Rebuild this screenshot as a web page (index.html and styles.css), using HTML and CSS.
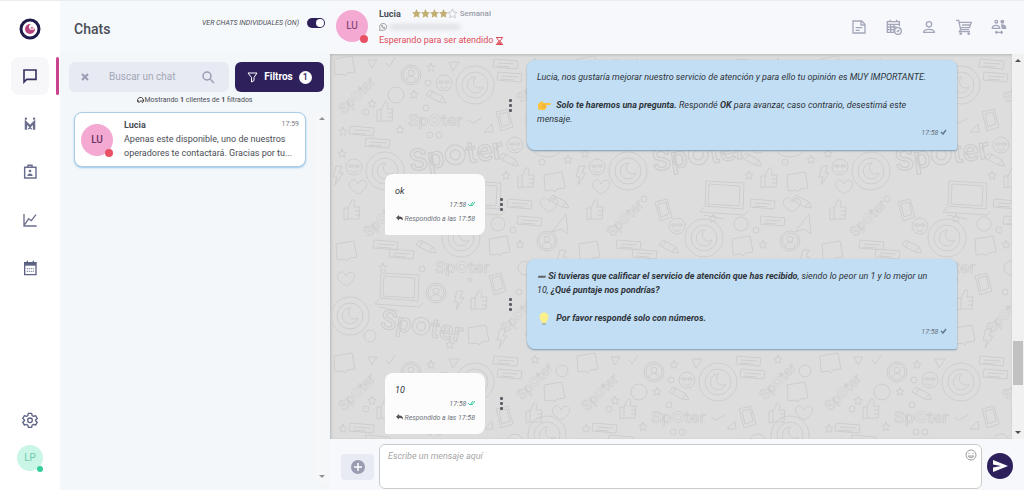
FILE: index.html
```html
<!DOCTYPE html>
<html lang="es">
<head>
    <meta charset="UTF-8">
    <meta name="viewport" content="width=device-width, initial-scale=1.0">
    <title>Chats</title>
    <link rel="stylesheet" href="styles.css">
</head>
<body>
    <div class="app">
        <!-- Sidebar -->
        <nav class="sidebar">
            <a href="#" class="logo" aria-label="Inicio">
                <svg width="22" height="22" viewBox="0 0 22 22">
                    <circle cx="11" cy="11" r="9" fill="#fff" stroke="#1f1c4b" stroke-width="3"/>
                    <circle cx="11" cy="11" r="5" fill="#b8447f"/>
                    <circle cx="13" cy="9" r="3" fill="#fff"/>
                    <circle cx="13" cy="10" r="1.500" fill="#d58fb2"/>
                </svg>
            </a>
            <a href="#" class="nav-item active" aria-label="Chats">
                <svg width="16" height="16" viewBox="0 0 24 24" fill="none" stroke="#38305f" stroke-width="2.4"><path d="M3 3h18v14H7l-4 4z"/></svg>
            </a>
            <a href="#" class="nav-item" aria-label="Contactos">
                <svg width="14" height="14" viewBox="0 0 24 24" fill="none" stroke="#6b6f8e" stroke-width="4"><path d="M5 22V9l7 7 7-7v13"/><path d="M9 21l3-3 3 3" stroke-width="2"/><circle cx="5" cy="3" r="1" stroke-width="2"/><circle cx="19" cy="3" r="1" stroke-width="2"/></svg>
            </a>
            <a href="#" class="nav-item" aria-label="Operadores">
                <svg width="16" height="16" viewBox="0 0 24 24" fill="none" stroke="#6b6f8e" stroke-width="2.2"><path d="M4 5h17v16H4zM9 5V2h6v3"/><circle cx="12" cy="10.500" r="2" fill="#6b6f8e" stroke="none"/><path d="M8 18c0-5 8-5 8 0z" fill="#6b6f8e" stroke="none"/></svg>
            </a>
            <a href="#" class="nav-item" aria-label="Estadísticas">
                <svg width="16" height="16" viewBox="0 0 24 24" fill="none" stroke="#6b6f8e" stroke-width="2"><path d="M3 3v18h19M4 19l6-9 4 3 7-9"/></svg>
            </a>
            <a href="#" class="nav-item" aria-label="Calendario">
                <svg width="16" height="16" viewBox="0 0 24 24" fill="none" stroke="#5e6284" stroke-width="2"><path d="M4 4h17v18H4z"/><path d="M4 6h17" stroke-width="5"/><path d="M8 1v4M17 1v4"/><path d="M7 13h11M7 17h11" stroke-dasharray="2 1" stroke="#9598ae"/></svg>
            </a>
            <div class="nav-bottom">
                <a href="#" aria-label="Configuración">
                    <svg width="16" height="16" viewBox="0 0 24 24" fill="none" stroke="#5e6284" stroke-width="2" stroke-linejoin="round"><path d="M9.500 2h5l.6 3.200 2.200 1.300 3.100-1.100 2.500 4.300-2.500 2.100v1.400l2.500 2.100-2.500 4.300-3.100-1.100-2.200 1.300-.6 3.200h-5l-.6-3.200-2.200-1.300-3.100 1.100-2.500-4.300 2.500-2.100v-1.400l-2.500-2.100 2.500-4.300 3.100 1.100 2.200-1.300z"/><circle cx="12" cy="12.500" r="3.500"/></svg>
                </a>
                <div class="avatar avatar-user">LP<span class="status"></span></div>
            </div>
        </nav>

        <!-- Chat list -->
        <aside class="chats">
            <header class="chats-header">
                <h1>Chats</h1>
                <label class="toggle">VER CHATS INDIVIDUALES (ON)
                    <input type="checkbox" checked>
                </label>
            </header>
            <div class="search-row">
                <div class="search">
                    <button aria-label="Limpiar"><svg width="8" height="8" viewBox="0 0 8 8" stroke="#9a9db3" stroke-width="2"><path d="M1 1l6 6M7 1L1 7"/></svg></button>
                    <input type="text" placeholder="Buscar un chat" aria-label="Buscar un chat">
                    <button aria-label="Buscar"><svg width="13" height="13" viewBox="0 0 13 13" fill="none" stroke="#9a9db3" stroke-width="1.500"><circle cx="5" cy="5" r="4"/><path d="M8 8l4 4"/></svg></button>
                </div>
                <button class="filters">
                    <svg width="11" height="11" viewBox="0 0 11 11" fill="none" stroke="#fff"><path d="M1 1h9L7 5.500v3L4.500 10V5.500z"/></svg>
                    Filtros <span class="count">1</span>
                </button>
            </div>
            <p class="results">
                <svg width="7" height="7" viewBox="0 0 7 7" fill="none" stroke="#444"><path d="M1 5a3 3 0 1 1 4 1M1 3v2h2M3 4h3"/></svg>Mostrando <b>1</b> clientes de <b>1</b> filtrados
            </p>
            <div class="list-wrap">
                <div class="list">
                    <a href="#" class="chat-card">
                        <div class="avatar">LU<span class="status"></span></div>
                        <div class="chat-info">
                            <div class="chat-top"><b>Lucia</b><time>17:59</time></div>
                            <p>Apenas este disponible, uno de nuestros operadores te contactará. Gracias por tu...</p>
                        </div>
                    </a>
                </div>
                <div class="scrollbar light"><i class="up"></i><i class="down"></i></div>
            </div>
        </aside>

        <!-- Conversation -->
        <main class="conversation">
            <header class="conv-header">
                <div class="avatar">LU<span class="status"></span></div>
                <div class="contact">
                    <div class="contact-name">
                        <b>Lucia</b>
                        <svg class="stars" width="46" height="10" viewBox="0 0 46 10">
                            <defs><path id="star" d="M4.500 0l1.400 3 3.100.4-2.300 2.200.6 3.200-2.800-1.500-2.800 1.500.6-3.200L0 3.400 3.100 3z"/></defs>
                            <g fill="#c1ae72"><use href="#star"/><use href="#star" x="9"/><use href="#star" x="18"/><use href="#star" x="27"/></g>
                            <use href="#star" x="36" fill="none" stroke="#b9b9b9" stroke-width=".7"/>
                        </svg>
                        <span class="tag">Semanal</span>
                    </div>
                    <div class="phone">
                        <svg width="8" height="8" viewBox="0 0 16 16" fill="none" stroke="#888" stroke-width="1.500"><path d="M1 15l1-4a7 7 0 1 1 3 3zM5 5c0 3 3 6 6 6l1-2-2-1-1 1-2-2 1-1-1-2z"/></svg>
                        <span class="phone-hidden"></span>
                    </div>
                    <div class="waiting">Esperando para ser atendido
                        <svg width="7" height="8" viewBox="0 0 7 8" fill="none" stroke="#e04c58"><path d="M0 .5h7M0 7.500h7M1 1c0 3 5 3 5 6M6 1c0 3-5 3-5 6"/><path d="M2 7l1.500-2L5 7z" fill="#e04c58"/></svg>
                    </div>
                </div>
                <div class="actions">
                    <button aria-label="Notas"><svg width="16" height="16" viewBox="0 0 24 24"><path d="M3 3h13l5 5v13H3zM15 3v6h6M7 13h10M7 17h6"/></svg></button>
                    <button aria-label="Agenda"><svg width="16" height="16" viewBox="0 0 24 24"><path d="M12 20H2V4h18v7M2 8h18M6 1v4M16 1v4M7 8v12M12 8v12M2 12h14M2 16h10"/><circle cx="18" cy="18" r="5"/><path d="M16 18l2 1 2-3"/></svg></button>
                    <button aria-label="Perfil"><svg width="16" height="16" viewBox="0 0 24 24"><circle cx="12" cy="8" r="4"/><path d="M4 20c0-6 16-6 16 0z"/></svg></button>
                    <button aria-label="Carrito"><svg width="16" height="16" viewBox="0 0 24 24"><path d="M0 2h4l3 14h13M5 5h18l-3 8H7M7 16l-2 3h16M9 9h12"/><circle cx="7" cy="22" r="1"/><circle cx="19" cy="22" r="1"/></svg></button>
                    <button aria-label="Transferir"><svg width="16" height="16" viewBox="0 0 24 24"><circle cx="8" cy="4" r="2"/><path d="M2 14c0-6 11-6 11 0z"/><circle cx="17" cy="4" r="2" fill="#a3a6b9"/><path d="M16 9c5 0 6 2 6 5h-5z" fill="#a3a6b9"/><path d="M7 20h10M9 18l-2 2 2 2M15 18l2 2-2 2"/></svg></button>
                </div>
            </header>

            <div class="messages-wrap">
                <div class="messages">
                    <svg class="wallpaper" aria-hidden="true">
                        <defs>
                            <g id="moon"><circle r="19"/><circle r="13"/><path d="M1-8a8 8 0 1 0 7 10a6 6 0 0 1-7-10z"/></g>
                            <g id="word"><text class="doodle-text" x="-36" y="8">Sp</text><circle cx="1" r="8"/><circle cx="1" r="4"/><text class="doodle-text" x="10" y="8">ter</text></g>
                            <g id="note"><path d="M-10-7l18-3 3 16-8 1-2 3-2-2-8 1z"/></g>
                            <g id="label"><path d="M-12-5l24 2-1 8-24-2zM-8-1l16 1M-9 2l13 1"/></g>
                            <g id="pencil"><path d="M-9-7l13 7 3 6-7-1-13-7zM4 0l-4 5M-6-6l-3 5"/></g>
                            <g id="thumb"><path d="M-8-2h4l4-8c4-1 3 3 2 7h6l-1 12H-4l-4 1zM-4-2v11M3 1h5M3 5h5"/></g>
                            <g id="person"><circle r="10"/><circle r="8"/><circle cy="-2" r="3"/><path d="M-5 6c0-6 10-6 10 0"/></g>
                            <g id="smile"><circle r="8"/><path d="M-5-2h4v2h-4zM1-2h4v2H1zM-4 3c2 3 6 3 8 0"/></g>
                            <g id="tablet"><path d="M-8-8l12-3 5 18-12 4zM-5-6l8-2 3 12-8 3z"/></g>
                            <g id="laptop"><path d="M-18-14l38 2-1 26-38-3zM-15-11l31 2-1 20-31-2zM-20 12l-4 5 44 3 4-4M-20 20l20 4"/></g>
                            <g id="heart"><path d="M0 7c-8-5-11-9-7-13 3-3 6 0 7 3 2-4 6-5 8-2 2 4-2 9-8 12z"/></g>
                            <g id="bolt"><path d="M-2-9h6L1-2h4l-8 12 2-8h-4z"/></g>
                            <g id="mini"><path d="M0-4l1 3 3 .4-2 2 .4 3-2.400-1.500L-2.400 4.400l.4-3-2-2 3-.4z"/></g>
                            <pattern id="doodles" width="243" height="297" patternUnits="userSpaceOnUse">
                                <g class="doodle">
                                    <use href="#moon" x="145" y="31"/><use href="#moon" x="55" y="117"/><use href="#moon" x="131" y="184"/><use href="#moon" x="217" y="84"/><use href="#moon" x="20" y="262"/>
                                    <use href="#word" transform="translate(26 42) rotate(-45) scale(.6)"/>
                                    <use href="#word" transform="translate(104 66) scale(.72)"/>
                                    <use href="#word" transform="translate(124 101) rotate(-8) scale(1.250)"/>
                                    <use href="#word" transform="translate(51 165) rotate(-45) scale(.6)"/>
                                    <use href="#word" transform="translate(131 213) scale(.72)"/>
                                    <use href="#word" transform="translate(90 272) rotate(10) scale(1.100)"/>
                                    <use href="#word" transform="translate(204 31) rotate(-45) scale(.6)"/>
                                    <use href="#word" transform="translate(188 261) rotate(-45) scale(.6)"/>
                                    <use href="#note" x="14" y="12"/><use href="#note" x="224" y="41"/><use href="#note" x="224" y="128"/><use href="#note" x="169" y="192"/><use href="#note" x="16" y="197"/><use href="#note" x="148" y="281"/>
                                    <use href="#label" x="176" y="10"/><use href="#label" x="180" y="23"/><use href="#label" x="32" y="77"/><use href="#label" x="48" y="89"/><use href="#label" x="190" y="150"/><use href="#label" x="200" y="167"/><use href="#label" x="56" y="191"/><use href="#label" x="72" y="200"/><use href="#label" x="221" y="232"/>
                                    <use href="#pencil" x="109" y="43"/><use href="#pencil" x="182" y="106"/><use href="#pencil" x="232" y="148"/><use href="#pencil" x="99" y="193"/><use href="#pencil" x="208" y="282"/>
                                    <use href="#thumb" x="55" y="58"/><use href="#thumb" x="204" y="62"/><use href="#thumb" x="196" y="124"/><use href="#thumb" x="22" y="156"/><use href="#thumb" x="149" y="246"/>
                                    <use href="#person" x="81" y="21"/><use href="#person" x="217" y="187"/><use href="#person" x="106" y="239"/>
                                    <use href="#smile" x="114" y="29"/><use href="#smile" x="24" y="113"/><use href="#smile" x="185" y="91"/><use href="#smile" x="221" y="256"/><use href="#smile" x="104" y="172"/>
                                    <use href="#tablet" x="174" y="66"/><use href="#tablet" x="90" y="156"/><use href="#tablet" x="167" y="230"/>
                                    <use href="#laptop" x="151" y="141"/><use href="#laptop" x="69" y="233"/>
                                    <use href="#heart" x="28" y="133"/><use href="#heart" x="219" y="151"/><use href="#heart" x="231" y="62"/><use href="#heart" x="16" y="225"/>
                                    <use href="#bolt" x="8" y="121"/><use href="#bolt" x="129" y="246"/><use href="#bolt" x="172" y="284"/><use href="#bolt" x="232" y="205"/>
                                    <circle cx="66" cy="41" r="8"/><circle cx="168" cy="170" r="7"/><circle cx="232" cy="20" r="6"/><circle cx="195" cy="214" r="7"/><circle cx="40" cy="282" r="6"/>
                                    <path d="M38 6h9l-5 8zM119 8h10l-6 9zM154 78h9l-1-8zM222 178l14-18 2 20-7-5zM56 9l3 4 6-9M138 66l5 3 9-5"/>
                                    <use href="#mini" x="42" y="49"/><use href="#mini" x="84" y="40"/><use href="#mini" x="13" y="77"/><use href="#mini" x="70" y="75"/><use href="#mini" x="12" y="99"/><use href="#mini" x="101" y="13"/><use href="#mini" x="205" y="8"/><use href="#mini" x="176" y="121"/><use href="#mini" x="140" y="164"/><use href="#mini" x="53" y="213"/><use href="#mini" x="190" y="190"/><use href="#mini" x="238" y="105"/><use href="#mini" x="207" y="219"/><use href="#mini" x="120" y="290"/>
                                    <circle cx="98" cy="29" r="3"/><circle cx="96" cy="54" r="3"/><circle cx="36" cy="58" r="3"/><circle cx="100" cy="81" r="3"/><circle cx="109" cy="81" r="3"/><circle cx="212" cy="108" r="3"/><circle cx="71" cy="145" r="3"/><circle cx="183" cy="176" r="3"/><circle cx="92" cy="215" r="3"/><circle cx="140" cy="226" r="2"/><circle cx="189" cy="238" r="3"/>
                                </g>
                            </pattern>
                        </defs>
                        <rect width="100%" height="100%" fill="url(#doodles)"/>
                    </svg>

                    <div class="row sent">
                        <button class="dots" aria-label="Opciones"><i></i><i></i><i></i></button>
                        <div class="bubble">
                            <p>Lucia, nos gustaría mejorar nuestro servicio de atención y para ello tu opinión es MUY IMPORTANTE.</p>
                            <p class="spaced"><svg class="emoji" width="14" height="11" viewBox="0 0 14 11"><path d="M1 4l4-3 2 2h6c1 0 1 2 0 2H9c1 1 1 2 0 3 0 1-1 2-2 2H3L1 9z" fill="#fcc43e"/><path d="M5 5h4M5 7h4" stroke="#e2992f" stroke-width=".6"/></svg> <b>Solo te haremos una pregunta.</b> Respondé <b>OK</b> para avanzar, caso contrario, desestimá este mensaje.</p>
                            <div class="meta">17:58 <svg width="7" height="6" viewBox="0 0 7 6" fill="none" stroke="#667b8c" stroke-width="1.500"><path d="M1 3l2 2 3-4"/></svg></div>
                        </div>
                    </div>

                    <div class="row received">
                        <div class="bubble">
                            <p>ok</p>
                            <div class="meta">17:58 <svg width="7" height="7" viewBox="0 0 7 7" fill="none" stroke="#35c99a"><path d="M0 4l2 2 3-4M3 5l1 1 3-4"/></svg></div>
                            <div class="replied"><svg width="7" height="6" viewBox="0 0 7 6"><path d="M3 0v1.500c3 0 4 1 4 4C6 4 5 4 3 4v1.500L0 2.700z" fill="#555"/></svg> Respondido a las 17:58</div>
                        </div>
                        <button class="dots" aria-label="Opciones"><i></i><i></i><i></i></button>
                    </div>

                    <div class="row sent">
                        <button class="dots" aria-label="Opciones"><i></i><i></i><i></i></button>
                        <div class="bubble">
                            <p><b><span class="dash">➖</span> Si tuvieras que calificar el servicio de atención que has recibido</b>, siendo lo peor un 1 y lo mejor un 10, <b>¿Qué puntaje nos pondrías?</b></p>
                            <p class="spaced"><svg class="emoji" width="14" height="13" viewBox="0 0 14 13"><circle cx="7" cy="5" r="4.500" fill="#fbf08a"/><path d="M4 8h6l-1 3H5z" fill="#fbf08a"/><path d="M5 11h4v1l-1 1H6l-1-1z" fill="#a9b2b6"/></svg> <b>Por favor respondé solo con números.</b></p>
                            <div class="meta">17:58 <svg width="7" height="6" viewBox="0 0 7 6" fill="none" stroke="#667b8c" stroke-width="1.500"><path d="M1 3l2 2 3-4"/></svg></div>
                        </div>
                    </div>

                    <div class="row received">
                        <div class="bubble">
                            <p>10</p>
                            <div class="meta">17:58 <svg width="7" height="7" viewBox="0 0 7 7" fill="none" stroke="#35c99a"><path d="M0 4l2 2 3-4M3 5l1 1 3-4"/></svg></div>
                            <div class="replied"><svg width="7" height="6" viewBox="0 0 7 6"><path d="M3 0v1.500c3 0 4 1 4 4C6 4 5 4 3 4v1.500L0 2.700z" fill="#555"/></svg> Respondido a las 17:58</div>
                        </div>
                        <button class="dots" aria-label="Opciones"><i></i><i></i><i></i></button>
                    </div>
                </div>
                <div class="scrollbar"><i class="up"></i><span class="thumb"></span><i class="down"></i></div>
            </div>

            <footer class="composer">
                <button class="attach" aria-label="Adjuntar">
                    <svg width="14" height="14" viewBox="0 0 14 14"><circle cx="7" cy="7" r="7" fill="#9a9cb2"/><path d="M7 3v8M3 7h8" stroke="#fff" stroke-width="1.500"/></svg>
                </button>
                <div class="message-box">
                    <textarea placeholder="Escribe un mensaje aquí" aria-label="Mensaje"></textarea>
                    <button class="smiley" aria-label="Emojis">
                        <svg width="12" height="12" viewBox="0 0 12 12" fill="none" stroke="#9c9c9c"><circle cx="6" cy="6" r="5"/><path d="M4 4v1M8 4v1M3 7c1 2 5 2 6 0z"/></svg>
                    </button>
                </div>
                <button class="send" aria-label="Enviar">
                    <svg width="16" height="14" viewBox="0 0 16 14"><path d="M1 1l15 6-15 6V8.500L9 7 1 5.500z" fill="#fff"/></svg>
                </button>
            </footer>
        </main>
    </div>
</body>
</html>
```
FILE: styles.css
```css
* {
    margin: 0;
    padding: 0;
    box-sizing: border-box;
}

body {
    font-family: Roboto, "Liberation Sans", sans-serif;
    font-size: 9px;
    line-height: 14px;
    color: #4a4d55;
    background-color: #fff;
}

button, input, textarea {
    font: inherit;
    color: inherit;
    border: none;
    background: none;
    outline: none;
}

button {
    cursor: pointer;
}

a {
    color: inherit;
    text-decoration: none;
}

svg {
    flex: none;
}

.app {
    display: grid;
    grid-template-columns: 60px 270px 1fr;
    height: 100vh;
    border-top: 1px solid #e9edf2;
}

/* Sidebar */
.sidebar {
    display: flex;
    flex-direction: column;
    align-items: center;
    gap: 10px;
    padding: 17px 0 19px;
}

.logo {
    height: 22px;
    margin-bottom: 7px;
}

.nav-item {
    display: flex;
    align-items: center;
    justify-content: center;
    width: 38px;
    height: 38px;
    border-radius: 8px;
}

.nav-item.active {
    position: relative;
    background-color: #f7f7f9;
}

.nav-item.active::after {
    content: "";
    position: absolute;
    right: -10px;
    width: 3px;
    height: 38px;
    border-radius: 2px;
    background-color: #c9438f;
}

.nav-bottom {
    display: flex;
    flex-direction: column;
    align-items: center;
    gap: 17px;
    margin-top: auto;
}

.nav-bottom a {
    height: 16px;
}

.avatar {
    position: relative;
    display: flex;
    flex: none;
    align-items: center;
    justify-content: center;
    width: 32px;
    height: 32px;
    border-radius: 50%;
    background-color: #f4a9d3;
    color: #6d3563;
    font-size: 10px;
    font-weight: 500;
}

.status {
    position: absolute;
    right: 0;
    bottom: -1px;
    width: 8px;
    height: 8px;
    border-radius: 50%;
    background-color: #ea5064;
}

.avatar-user {
    width: 26px;
    height: 26px;
    background-color: #c9f6e6;
    color: #71cbae;
    font-weight: 400;
}

.avatar-user .status {
    width: 6px;
    height: 6px;
    background-color: #32cf9c;
}

/* Chat list */
.chats {
    display: flex;
    flex-direction: column;
    background-color: #f3f7fa;
}

.chats-header {
    display: flex;
    justify-content: space-between;
    height: 51px;
    padding: 15px 5px 0 14px;
    background-color: #f6f9fc;
}

.chats-header h1 {
    font-size: 14px;
    font-weight: 500;
    line-height: 26px;
}

.toggle {
    display: flex;
    align-items: center;
    gap: 8px;
    height: 14px;
    font-size: 7px;
    font-style: italic;
}

.toggle input {
    display: flex;
    align-items: center;
    justify-content: flex-end;
    appearance: none;
    width: 18px;
    height: 10px;
    padding: 1px;
    border-radius: 5px;
    background-color: #2e205b;
}

.toggle input::before {
    content: "";
    width: 8px;
    height: 8px;
    border-radius: 50%;
    background-color: #fff;
}

.search-row {
    display: flex;
    gap: 6px;
    padding: 10px 6px 0 9px;
}

.search {
    display: flex;
    flex: 1;
    align-items: center;
    gap: 16px;
    height: 30px;
    padding: 0 14px 0 12px;
    border-radius: 6px;
    background-color: #e7eaf3;
}

.search button {
    display: flex;
}

.search input {
    flex: 1;
    width: 0;
    padding-left: 4px;
    font-size: 9px;
}

.search input::placeholder {
    color: #a4a7b7;
}

.filters {
    display: flex;
    align-items: center;
    justify-content: center;
    gap: 6px;
    width: 89px;
    border-radius: 6px;
    background-color: #2e205b;
    color: #fff;
    font-size: 9px;
    font-weight: 700;
}

.search input, .filters {
    font-size: 10px;
}

.count {
    width: 13px;
    height: 13px;
    border-radius: 50%;
    background-color: #fff;
    color: #2e205b;
    font-size: 9px;
    font-weight: 500;
    line-height: 13px;
}

.results {
    padding: 1px 0 5px;
    font-size: 7px;
    text-align: center;
}

.results svg {
    vertical-align: middle;
}

.list-wrap {
    display: flex;
    flex: 1;
    padding-bottom: 7px;
}

.list {
    flex: 1;
    padding: 0 10px 0 14px;
}

.chat-card {
    display: flex;
    gap: 11px;
    height: 55px;
    padding: 5px 6px;
    border: 1px solid #a9cde8;
    border-radius: 8px;
    background-color: #fff;
    box-shadow: 0 1px 2px #9cc6e6;
}

.chat-card .avatar {
    margin-top: 6px;
}

.chat-info {
    flex: 1;
    min-width: 0;
}

.chat-top {
    display: flex;
    justify-content: space-between;
}

.chat-top time {
    color: #777a82;
    font-size: 7px;
    line-height: 12px;
}

/* Scrollbars */
.scrollbar {
    display: flex;
    flex-direction: column;
    align-items: center;
    width: 12px;
    padding: 5px 0;
    background-color: #f1f1f1;
}

.scrollbar .up, .scrollbar .down {
    border: 3px solid transparent;
    border-top-width: 0;
    border-bottom: 3px solid #505050;
}

.scrollbar .down {
    border-top: 3px solid #505050;
    border-bottom-width: 0;
    margin-top: auto;
}

.scrollbar .thumb {
    width: 10px;
    height: 44px;
    margin-top: auto;
    background-color: #c1c1c1;
}

.scrollbar .thumb + .down {
    margin-top: 46px;
}

.scrollbar.light {
    margin-right: 2px;
    background-color: #f5f7f9;
}

.scrollbar.light i {
    opacity: .6;
}

/* Conversation */
.conversation {
    display: flex;
    flex-direction: column;
    min-width: 0;
    height: calc(100vh - 1px);
    background-color: #f6f8fc;
}

.conv-header {
    display: flex;
    flex: none;
    gap: 11px;
    height: 53px;
    padding: 6px 16px 0 6px;
}

.conv-header .avatar {
    margin-top: 3px;
    font-weight: 400;
}

.contact-name {
    display: flex;
    align-items: center;
}

.contact-name .stars {
    margin: 0 2px 0 11px;
}

.tag {
    color: #999ca6;
    font-size: 8px;
    font-weight: 500;
}

.phone {
    display: flex;
    align-items: center;
    height: 12px;
}

.phone-hidden {
    width: 70px;
    height: 6px;
    margin-left: 3px;
    background-color: #dfe1e5;
    filter: blur(2px);
}

.waiting {
    color: #e04c58;
}

.waiting svg {
    vertical-align: middle;
}

.actions {
    display: flex;
    gap: 19px;
    height: 16px;
    margin: 12px 1px 0 auto;
}

.actions svg {
    display: block;
    fill: none;
    stroke: #a3a6b9;
    stroke-width: 2;
}

.messages-wrap {
    display: flex;
    flex: 1;
    min-height: 0;
}

.messages {
    position: relative;
    display: flex;
    flex: 1;
    flex-direction: column;
    gap: 24px;
    padding: 6px 55px 0;
    overflow: hidden;
    background-color: #dddddd;
    box-shadow: inset 1px 1px 3px #b5b5b5;
}

.wallpaper {
    position: absolute;
    inset: 0;
    width: 100%;
    height: 100%;
}

.doodle {
    fill: none;
    stroke: #cdcdcd;
    stroke-width: 1;
}

.doodle-text {
    font-size: 24px;
    font-weight: 500;
}

.row {
    position: relative;
    display: flex;
    align-items: center;
    gap: 14px;
}

.sent {
    justify-content: flex-end;
}

.bubble {
    padding: 10px;
    border-radius: 8px;
    color: #30343a;
    font-style: italic;
}

.sent .bubble {
    width: 430px;
    border-bottom-right-radius: 2px;
    background-color: #c1def4;
    box-shadow: 0 1px 2px #7c98b0;
}

.sent .bubble p {
    padding-right: 8px;
}

.received .bubble {
    width: 100px;
    padding-bottom: 9px;
    border-bottom-left-radius: 2px;
    background-color: #fcfcfc;
}

.spaced {
    margin-top: 14px;
}

.dash {
    font-size: 7px;
    line-height: 12px;
}

.emoji {
    margin-right: 3px;
    vertical-align: middle;
}

.meta, .replied {
    color: #6d737b;
    font-size: 7px;
    text-align: right;
}

.replied {
    white-space: nowrap;
}

.dots {
    display: flex;
    flex-direction: column;
    gap: 2px;
    padding: 0 1px;
}

.dots i {
    width: 3px;
    height: 3px;
    border-radius: 1px;
    background-color: #5c5f66;
}

.composer {
    display: flex;
    flex: none;
    gap: 5px;
    height: 51px;
    padding: 5px 11px 1px;
}

.attach {
    display: flex;
    align-items: center;
    justify-content: center;
    width: 33px;
    height: 26px;
    margin-top: 10px;
    border-radius: 4px;
    background-color: #e8eaf4;
}

.message-box {
    display: flex;
    flex: 1;
    padding: 4px;
    border: 1px solid #c9cdc9;
    border-radius: 6px;
    background-color: #fff;
}

.message-box textarea {
    flex: 1;
    padding-left: 4px;
    resize: none;
    font-style: italic;
}

.message-box textarea::placeholder {
    color: #a5a5a5;
}

.smiley {
    height: 12px;
}

.send {
    display: flex;
    align-items: center;
    justify-content: center;
    width: 26px;
    height: 26px;
    margin-top: 9px;
    border-radius: 50%;
    background-color: #2e205b;
}
```
